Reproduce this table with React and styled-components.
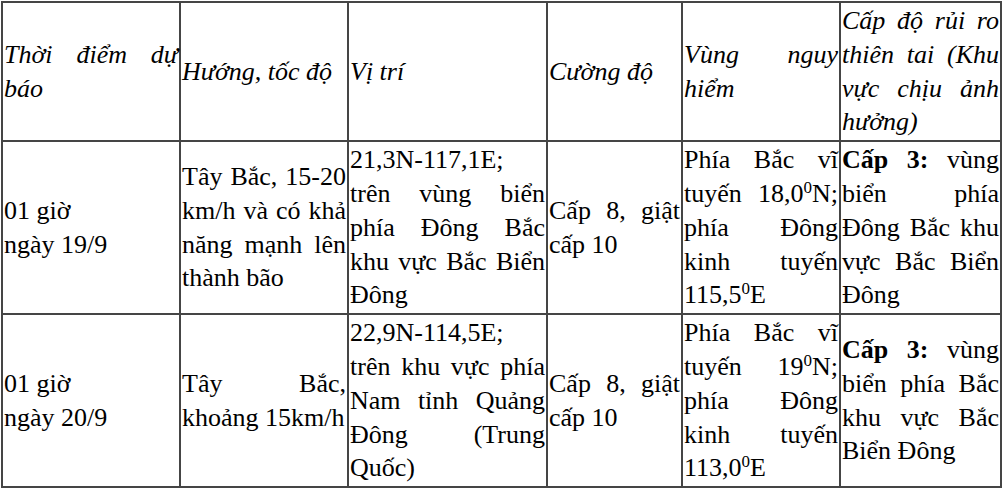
import React from "react";
import styled, { createGlobalStyle } from "styled-components";

const GlobalStyle = createGlobalStyle`
  html, body {
    margin: 0;
    padding: 0;
    background: #ffffff;
  }
`;

const columns = [
  { label: "Thời điểm dự báo", width: 178 },
  { label: "Hướng, tốc độ", width: 168 },
  { label: "Vị trí", width: 199 },
  { label: "Cường độ", width: 135 },
  { label: "Vùng nguy hiểm", width: 158 },
  { label: "Cấp độ rủi ro thiên tai (Khu vực chịu ảnh hưởng)", width: 161 },
];

const rows = [
  {
    time: ["01 giờ", "ngày 19/9"],
    direction: "Tây Bắc, 15-20 km/h và có khả năng mạnh lên thành bão",
    position: "21,3N-117,1E; trên vùng biển phía Đông Bắc khu vực Bắc Biển Đông",
    strength: "Cấp 8, giật cấp 10",
    danger: [
      "Phía Bắc vĩ tuyến 18,0",
      "N; phía Đông kinh tuyến 115,5",
      "E",
    ],
    risk: "vùng biển phía Đông Bắc khu vực Bắc Biển Đông",
  },
  {
    time: ["01 giờ", "ngày 20/9"],
    direction: "Tây Bắc, khoảng 15km/h",
    position: "22,9N-114,5E; trên khu vực phía Nam tỉnh Quảng Đông (Trung Quốc)",
    strength: "Cấp 8, giật cấp 10",
    danger: ["Phía Bắc vĩ tuyến 19", "N; phía Đông kinh tuyến 113,0", "E"],
    risk: "vùng biển phía Bắc khu vực Bắc Biển Đông",
  },
];

const Page = styled.div`
  padding: 1px 0 0 1px;
`;

const Table = styled.table`
  width: 1001px;
  table-layout: fixed;
  border-collapse: separate;
  border-spacing: 0;
  border: 1px solid #454545;
  font-family: "Liberation Serif", "Times New Roman", serif;
  font-size: 26px;
  line-height: 1.3;
  color: #000000;
`;

const HeadCell = styled.th`
  box-sizing: border-box;
  width: ${(p) => p.$width}px;
  border: 1px solid #454545;
  padding: 1px;
  font-weight: normal;
  font-style: italic;
  text-align: justify;
  vertical-align: middle;
`;

const Cell = styled.td`
  border: 1px solid #454545;
  padding: 1px;
  text-align: justify;
  vertical-align: middle;
`;

const Degree = styled.sup`
  font-size: 17px;
  line-height: 0;
  vertical-align: 9px;
`;

const Strong = styled.b`
  font-weight: bold;
`;

export default function App() {
  return (
    <Page>
      <GlobalStyle />
      <Table>
        <thead>
          <tr>
            {columns.map((col) => (
              <HeadCell key={col.label} $width={col.width}>
                {col.label}
              </HeadCell>
            ))}
          </tr>
        </thead>
        <tbody>
          {rows.map((row) => (
            <tr key={row.time[1]}>
              <Cell>
                {row.time[0]}
                <br />
                {row.time[1]}
              </Cell>
              <Cell>{row.direction}</Cell>
              <Cell>{row.position}</Cell>
              <Cell>{row.strength}</Cell>
              <Cell>
                {row.danger[0]}
                <Degree>0</Degree>
                {row.danger[1]}
                <Degree>0</Degree>
                {row.danger[2]}
              </Cell>
              <Cell>
                <Strong>Cấp 3:</Strong> {row.risk}
              </Cell>
            </tr>
          ))}
        </tbody>
      </Table>
    </Page>
  );
}
